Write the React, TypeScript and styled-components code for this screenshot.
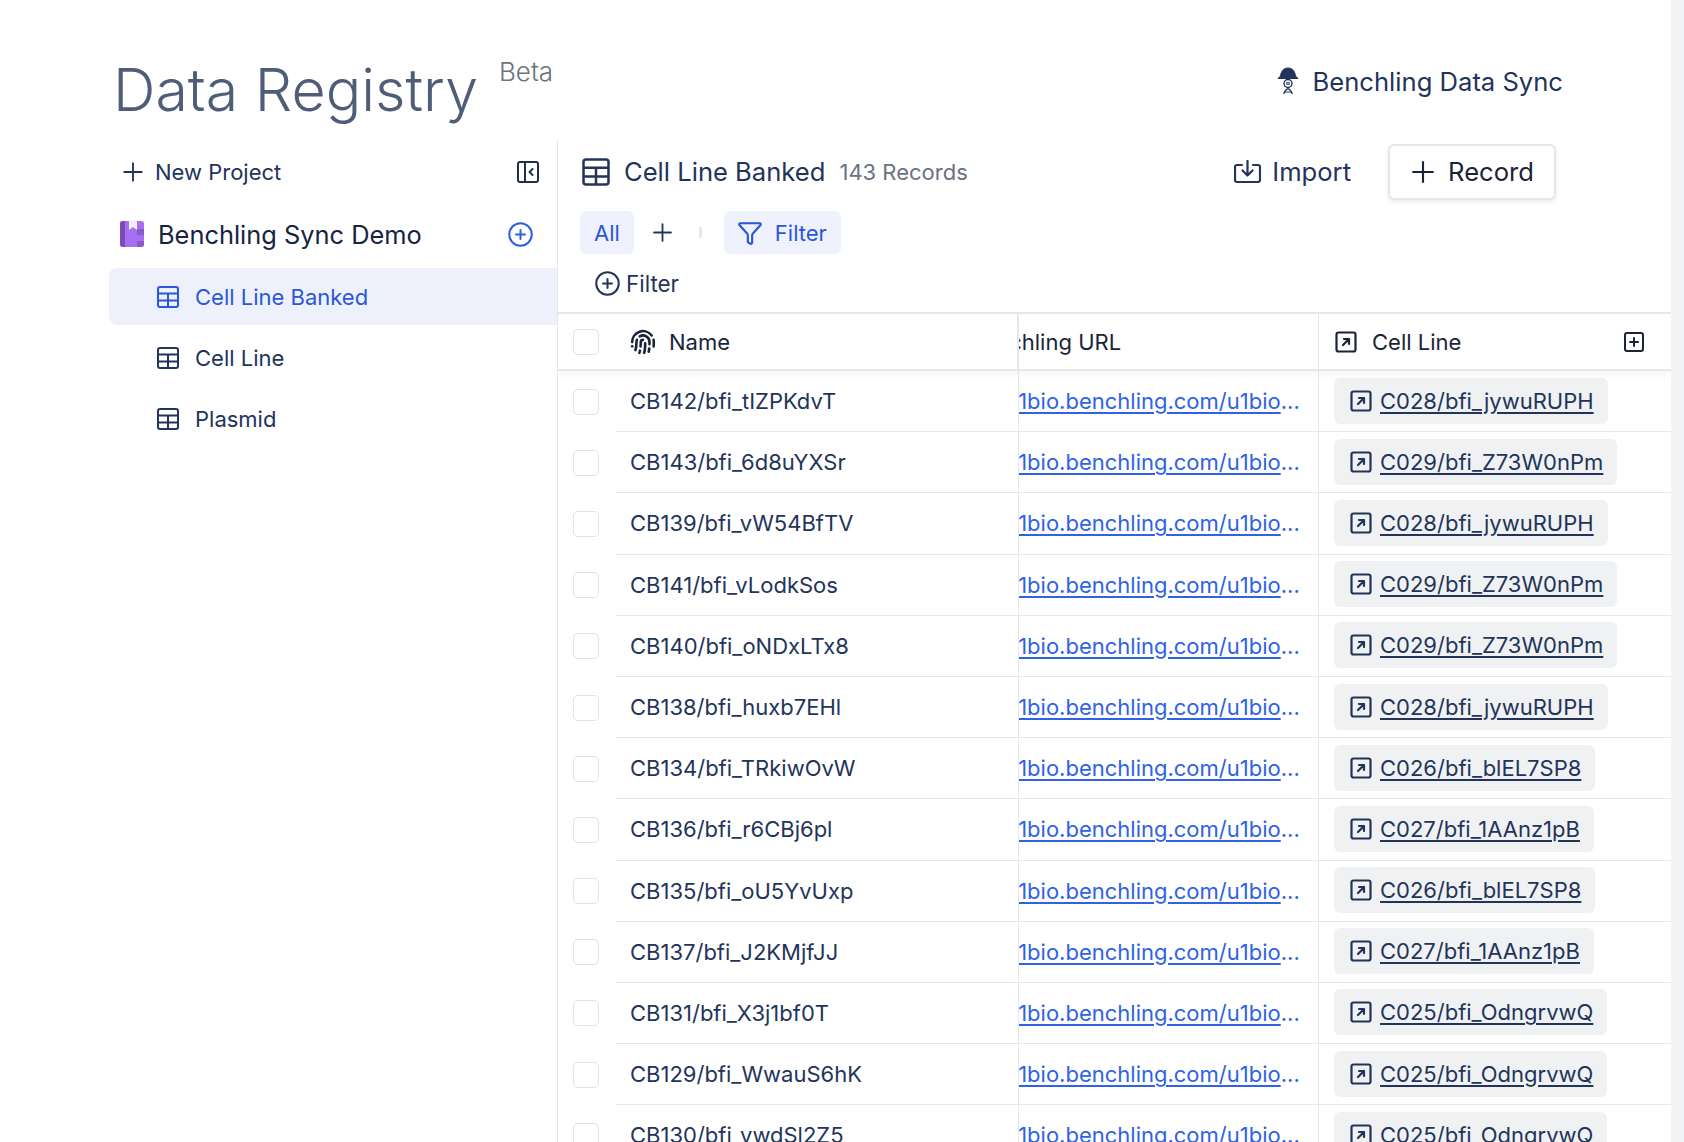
import React from 'react';
import styled, { createGlobalStyle } from 'styled-components';
import { CirclePlus, Fingerprint, Funnel, Plus, SquarePlus } from 'lucide-react';

const navy = '#22345a';
const ink = '#1a2338';
const blue = '#2b57d9';
const line = '#e5e7eb';

const GlobalStyle = createGlobalStyle`
  html, body {
    margin: 0;
    height: 100%;
    overflow: hidden;
    background: #fff;
    font-family: Inter, "Liberation Sans", sans-serif;
  }
`;

const Page = styled.div`
  display: flex;
  width: 1684px;
  height: 1142px;
  overflow: hidden;
`;

const Content = styled.div`
  flex: 1;
  min-width: 0;
  display: flex;
  flex-direction: column;
`;

const ScrollTrack = styled.div`
  flex: 0 0 13px;
  background: #f3f4f6;
`;

const TopBar = styled.header`
  flex: 0 0 140px;
  display: flex;
  justify-content: space-between;
  padding: 0 108px 0 113px;
`;

const TitleGroup = styled.div`
  display: flex;
  align-items: flex-start;
  gap: 21px;
`;

const Title = styled.h1`
  margin: 54px 0 0;
  font-size: 59px;
  line-height: 72px;
  font-weight: 300;
  color: #4f5d78;
`;

const Beta = styled.span`
  margin-top: 56px;
  font-size: 26px;
  line-height: 32px;
  font-weight: 300;
  color: #6b7280;
`;

const SyncLink = styled.div`
  display: flex;
  align-items: center;
  gap: 14px;
  margin-top: 61px;
  height: 40px;
  font-size: 25.6px;
  color: ${navy};
`;

const Body = styled.div`
  flex: 1;
  min-height: 0;
  display: flex;
`;

const Sidebar = styled.aside`
  flex: 0 0 558px;
  box-sizing: border-box;
  border-right: 1px solid ${line};
  padding-left: 109px;
  display: flex;
  flex-direction: column;
`;

const NewProjectRow = styled.div`
  height: 64px;
  display: flex;
  align-items: center;
  padding: 0 18px 0 9px;
  gap: 7px;
  font-size: 22px;
  color: ${navy};
`;

const Spacer = styled.div`
  flex: 1;
`;

const ProjectRow = styled.div`
  height: 62px;
  margin-bottom: 2px;
  padding: 0 23px 2px 11px;
  box-sizing: border-box;
  display: flex;
  align-items: center;
  gap: 14px;
  font-size: 25.4px;
  color: #16243f;
`;

const TableRow = styled.div<{ $active?: boolean }>`
  height: 57.2px;
  margin-bottom: 4px;
  display: flex;
  align-items: center;
  gap: 15px;
  padding-left: 47px;
  border-radius: 8px 0 0 8px;
  font-size: 22px;
  background: ${(p) => (p.$active ? '#eef1fc' : 'transparent')};
  color: ${(p) => (p.$active ? blue : navy)};
`;

const Main = styled.main`
  flex: 1;
  min-width: 0;
  display: flex;
  flex-direction: column;
`;

const MainHeader = styled.div`
  height: 63px;
  display: flex;
  align-items: center;
  padding: 0 115px 0 23px;
  color: ${navy};
`;

const MainTitle = styled.span`
  margin-left: 13px;
  font-size: 25.6px;
`;

const RecordCount = styled.span`
  margin-left: 14px;
  font-size: 22px;
  color: #6b7280;
`;

const ImportButton = styled.button`
  display: flex;
  align-items: center;
  gap: 11px;
  margin-right: 37px;
  padding: 0;
  border: 0;
  background: none;
  font: inherit;
  font-size: 25.6px;
  color: ${navy};
`;

const RecordButton = styled.button`
  width: 168px;
  height: 56px;
  box-sizing: border-box;
  display: flex;
  align-items: center;
  justify-content: center;
  gap: 8px;
  padding: 0 4px 0 0;
  border: 2px solid ${line};
  border-radius: 6px;
  background: #fff;
  box-shadow: 0 2px 4px rgba(17, 24, 39, 0.08);
  font: inherit;
  font-size: 25.6px;
  color: ${ink};
`;

const ViewBar = styled.div`
  height: 43px;
  margin-top: 8px;
  display: flex;
  align-items: center;
  padding-left: 22px;
`;

const ViewPill = styled.div`
  height: 43px;
  display: flex;
  align-items: center;
  gap: 12px;
  padding: 0 14px;
  border-radius: 6px;
  background: #eff2fc;
  font-size: 22px;
  color: ${blue};
`;

const FilterIcon = styled(Funnel)`
  margin-left: -1px;
`;

const AddView = styled.div`
  display: flex;
  margin: 0 22px 0 14px;
  color: ${navy};
`;

const Divider = styled.div`
  width: 3px;
  height: 11px;
  margin-right: 22px;
  background: ${line};
`;

const FilterRow = styled.div`
  height: 58px;
  display: flex;
  align-items: center;
  gap: 5px;
  padding-left: 36px;
  font-size: 22.4px;
  color: ${navy};
`;

const Table = styled.div`
  flex: 1;
  min-height: 0;
  overflow: hidden;
  border-top: 2px solid ${line};
`;

const HeadRow = styled.div`
  position: relative;
  z-index: 1;
  height: 55px;
  display: grid;
  grid-template-columns: 461px 300px 1fr;
  border-bottom: 2px solid ${line};
  box-shadow: 0 4px 8px rgba(17, 24, 39, 0.04);
  background: #fff;
  font-size: 22px;
  color: ${ink};
`;

const Row = styled.div`
  height: 61.2px;
  display: grid;
  grid-template-columns: 461px 300px 1fr;
  color: ${navy};
  font-size: 22px;
`;

const FrozenCell = styled.div<{ $ruled?: boolean }>`
  display: flex;
  align-items: center;
  box-sizing: border-box;
  border-right: ${(p) => (p.$ruled ? 1 : 2)}px solid ${line};
`;

const CheckSlot = styled.div`
  flex: 0 0 58px;
  display: flex;
  justify-content: center;
  padding-right: 2px;
  box-sizing: border-box;
`;

const Check = styled.span`
  width: 26px;
  height: 26px;
  box-sizing: border-box;
  border: 1px solid #dfe2e7;
  border-radius: 5px;
  background: #fff;
`;

const HeadName = styled.div`
  display: flex;
  align-items: center;
  gap: 13px;
  padding-left: 14px;
`;

const NameText = styled.div`
  flex: 1;
  align-self: stretch;
  display: flex;
  align-items: center;
  padding-left: 14px;
  border-bottom: 1px solid ${line};
`;

const UrlHead = styled.div`
  display: flex;
  align-items: center;
  overflow: hidden;
  border-right: 1px solid ${line};
  white-space: nowrap;
`;

// the column is scrolled under the frozen name column
const ScrolledLabel = styled.span`
  margin-left: -50px;
`;

const UrlCell = styled.div`
  display: flex;
  align-items: center;
  overflow: hidden;
  box-sizing: border-box;
  border-right: 1px solid ${line};
  border-bottom: 1px solid ${line};
  white-space: nowrap;
  color: #2f62e6;
`;

const UrlLink = styled.a`
  margin-left: -88px;
  text-decoration: underline;
  text-underline-offset: 3px;
  color: inherit;
`;

const CellLineHead = styled.div`
  display: flex;
  align-items: center;
  gap: 14px;
  padding: 0 25px 0 15px;
`;

const CellLineCell = styled.div`
  display: flex;
  align-items: center;
  padding-left: 15px;
  box-sizing: border-box;
  border-bottom: 1px solid ${line};
`;

const Chip = styled.div`
  height: 46px;
  margin-bottom: 1px;
  display: flex;
  align-items: center;
  gap: 7px;
  padding: 0 14px 0 15px;
  border-radius: 6px;
  background: #f0f1f3;
`;

const ChipLink = styled.a`
  text-decoration: underline;
  text-underline-offset: 3px;
  color: ${navy};
`;

// simple data table glyph used across the sidebar and main header
const TableIcon = ({ size = 24 }: { size?: number }) => (
  <svg width={size} height={size} viewBox="0 0 24 24" fill="none" stroke="currentColor" strokeWidth="2">
    <rect x="2" y="2" width="20" height="20" rx="2" />
    <path d="M2 8.500h20M2 15.500h20M12 8.500v13.500" />
  </svg>
);

const LinkIcon = () => (
  <svg width="24" height="24" viewBox="0 0 24 24" fill="none" stroke="currentColor" strokeWidth="2.2" strokeLinecap="round" strokeLinejoin="round">
    <rect x="2.500" y="2.500" width="19" height="19" rx="2" />
    <path d="M9 15l6-6M10 9h5v5" />
  </svg>
);

const CollapseIcon = () => (
  <svg width="22" height="22" viewBox="0 0 22 22" fill="none" stroke="#1f2f4f" strokeWidth="2" strokeLinejoin="round" strokeLinecap="round">
    <rect x="1" y="1" width="20" height="20" rx="2" />
    <path d="M8 1v20M15.500 8l-3 3 3 3" />
  </svg>
);

const ImportIcon = () => (
  <svg width="27" height="24" viewBox="0 0 27 24" fill="none" stroke="currentColor" strokeWidth="2.2" strokeLinecap="round" strokeLinejoin="round">
    <path d="M8 5H3a2 2 0 0 0-2 2v13a2 2 0 0 0 2 2h21a2 2 0 0 0 2-2V7a2 2 0 0 0-2-2h-5" />
    <path d="M13.500 1v14M8.500 10.500l5 5 5-5" />
  </svg>
);

const BookIcon = () => (
  <svg width="24" height="28" viewBox="0 0 24 28">
    <rect x="0" y="1" width="24" height="26" rx="3" fill="#a66ef0" />
    <path d="M0 4a3 3 0 0 1 3-3h2v26H3a3 3 0 0 1-3-3z" fill="#7c4bb8" />
    <path d="M17 9h7v6h-7zM17 21h7v3a3 3 0 0 1-3 3h-4z" fill="#8a5cc8" />
    <path d="M9 0h8v10l-4-3-4 3z" fill="#f3eefc" />
  </svg>
);

const SyncMascot = () => (
  <svg width="22" height="28" viewBox="0 0 22 28" fill="none" stroke="#22345a">
    <path d="M1 11.500L3.500 9C4 4 7 1 11 1s7 3 7.500 8L21 11.500z" fill="#22345a" strokeLinejoin="round" />
    <circle cx="11" cy="16.500" r="4" strokeWidth="1.400" />
    <path d="M9 15.800h4M9 17.200h4" strokeWidth="1" />
    <path d="M7 27c0-3 2-4 4-5.500 2 1.500 4 2.500 4 5.500" strokeWidth="1.400" />
    <path d="M8 25h6" strokeWidth="1" />
  </svg>
);

const rows: [string, string][] = [
  ['CB142/bfi_tIZPKdvT', 'C028/bfi_jywuRUPH'],
  ['CB143/bfi_6d8uYXSr', 'C029/bfi_Z73W0nPm'],
  ['CB139/bfi_vW54BfTV', 'C028/bfi_jywuRUPH'],
  ['CB141/bfi_vLodkSos', 'C029/bfi_Z73W0nPm'],
  ['CB140/bfi_oNDxLTx8', 'C029/bfi_Z73W0nPm'],
  ['CB138/bfi_huxb7EHl', 'C028/bfi_jywuRUPH'],
  ['CB134/bfi_TRkiwOvW', 'C026/bfi_blEL7SP8'],
  ['CB136/bfi_r6CBj6pl', 'C027/bfi_1AAnz1pB'],
  ['CB135/bfi_oU5YvUxp', 'C026/bfi_blEL7SP8'],
  ['CB137/bfi_J2KMjfJJ', 'C027/bfi_1AAnz1pB'],
  ['CB131/bfi_X3j1bf0T', 'C025/bfi_OdngrvwQ'],
  ['CB129/bfi_WwauS6hK', 'C025/bfi_OdngrvwQ'],
  ['CB130/bfi_vwdSl2Z5', 'C025/bfi_OdngrvwQ'],
];

export default function App() {
  return (
    <Page>
      <GlobalStyle />
      <Content>
        <TopBar>
          <TitleGroup>
            <Title>Data Registry</Title>
            <Beta>Beta</Beta>
          </TitleGroup>
          <SyncLink>
            <SyncMascot />
            Benchling Data Sync
          </SyncLink>
        </TopBar>
        <Body>
          <Sidebar>
            <NewProjectRow>
              <Plus size={30} strokeWidth={1.5} />
              New Project
              <Spacer />
              <CollapseIcon />
            </NewProjectRow>
            <ProjectRow>
              <BookIcon />
              Benchling Sync Demo
              <Spacer />
              <CirclePlus size={27} strokeWidth={1.8} color="#2f5fe0" />
            </ProjectRow>
            <TableRow $active>
              <TableIcon />
              Cell Line Banked
            </TableRow>
            <TableRow>
              <TableIcon />
              Cell Line
            </TableRow>
            <TableRow>
              <TableIcon />
              Plasmid
            </TableRow>
          </Sidebar>
          <Main>
            <MainHeader>
              <TableIcon size={30} />
              <MainTitle>Cell Line Banked</MainTitle>
              <RecordCount>143 Records</RecordCount>
              <Spacer />
              <ImportButton>
                <ImportIcon />
                Import
              </ImportButton>
              <RecordButton>
                <Plus size={34} strokeWidth={1.5} />
                Record
              </RecordButton>
            </MainHeader>
            <ViewBar>
              <ViewPill>All</ViewPill>
              <AddView>
                <Plus size={29} strokeWidth={1.5} />
              </AddView>
              <Divider />
              <ViewPill>
                <FilterIcon size={26} strokeWidth={2} />
                Filter
              </ViewPill>
            </ViewBar>
            <FilterRow>
              <CirclePlus size={27} strokeWidth={1.8} />
              Filter
            </FilterRow>
            <Table>
              <HeadRow>
                <FrozenCell>
                  <CheckSlot>
                    <Check />
                  </CheckSlot>
                  <HeadName>
                    <Fingerprint size={26} strokeWidth={2.4} />
                    Name
                  </HeadName>
                </FrozenCell>
                <UrlHead>
                  <ScrolledLabel>Benchling URL</ScrolledLabel>
                </UrlHead>
                <CellLineHead>
                  <LinkIcon />
                  Cell Line
                  <Spacer />
                  <SquarePlus size={24} strokeWidth={2} />
                </CellLineHead>
              </HeadRow>
              {rows.map(([name, cellLine]) => (
                <Row key={name}>
                  <FrozenCell $ruled>
                    <CheckSlot>
                      <Check />
                    </CheckSlot>
                    <NameText>{name}</NameText>
                  </FrozenCell>
                  <UrlCell>
                    <UrlLink>https://u1bio.benchling.com/u1bio</UrlLink>...
                  </UrlCell>
                  <CellLineCell>
                    <Chip>
                      <LinkIcon />
                      <ChipLink>{cellLine}</ChipLink>
                    </Chip>
                  </CellLineCell>
                </Row>
              ))}
            </Table>
          </Main>
        </Body>
      </Content>
      <ScrollTrack />
    </Page>
  );
}
